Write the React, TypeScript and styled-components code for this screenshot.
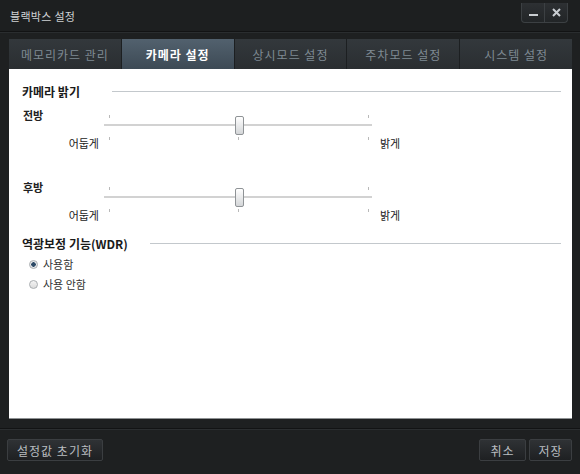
import styled, { createGlobalStyle } from "styled-components";

const GlobalStyle = createGlobalStyle`
  html, body {
    margin: 0;
    padding: 0;
    background: #1e2021;
  }
  body {
    font-family: "Noto Sans CJK KR", "Noto Sans", sans-serif;
  }
`;

const tabs = ["메모리카드 관리", "카메라 설정", "상시모드 설정", "주차모드 설정", "시스템 설정"];

interface SliderGroupProps {
  title: string;
  value: number;
}

const SliderGroup = ({ title, value }: SliderGroupProps) => {
  return (
    <SliderGrid>
      <GroupTitle>{title}</GroupTitle>
      <Slider>
        <Tick style={{ left: 5 }} $top />
        <Tick style={{ left: 264 }} $top />
        <Track />
        <Tick style={{ left: 5 }} />
        <Tick style={{ left: 134 }} />
        <Tick style={{ left: 264 }} />
        <Thumb style={{ left: 5 + value * 259 - 4 }} />
      </Slider>
      <DarkLabel>어둡게</DarkLabel>
      <BrightLabel>밝게</BrightLabel>
    </SliderGrid>
  );
};

const App = () => {
  return (
    <Window>
      <GlobalStyle />
      <TitleBar>
        <Title>블랙박스 설정</Title>
        <WinButtons>
          <WinButton>
            <svg width="9" height="9" viewBox="0 0 9 9">
              <rect x="0" y="6" width="9" height="2" fill="#c9cdd1" />
            </svg>
          </WinButton>
          <WinButton>
            <svg width="9" height="9" viewBox="0 0 9 9">
              <path d="M1 1 L8 8 M8 1 L1 8" stroke="#c9cdd1" strokeWidth="2" />
            </svg>
          </WinButton>
        </WinButtons>
      </TitleBar>

      <Body>
        <TabRow>
          {tabs.map((t, i) => (
            <Tab key={t} $active={i === 1}>
              {t}
            </Tab>
          ))}
        </TabRow>

        <Panel>
          <Heading $labelWidth={90}>
            <HeadingText>카메라 밝기</HeadingText>
            <HeadingLine />
          </Heading>

          <SliderGroup title="전방" value={0.5} />
          <Spacer $h={28} />
          <SliderGroup title="후방" value={0.5} />

          <Spacer $h={12} />
          <Heading $labelWidth={128}>
            <HeadingText>역광보정 기능(WDR)</HeadingText>
            <HeadingLine />
          </Heading>

          <RadioList>
            <RadioRow>
              <RadioDot $checked />
              사용함
            </RadioRow>
            <RadioRow>
              <RadioDot />
              사용 안함
            </RadioRow>
          </RadioList>
        </Panel>
      </Body>

      <Footer>
        <FooterButton $width={96}>설정값 초기화</FooterButton>
        <FooterRight>
          <FooterButton $width={47}>취소</FooterButton>
          <FooterButton $width={43}>저장</FooterButton>
        </FooterRight>
      </Footer>
    </Window>
  );
};

const Window = styled.div`
  width: 580px;
  height: 474px;
  background: #1e2021;
  display: flex;
  flex-direction: column;
  overflow: hidden;
`;

const TitleBar = styled.div`
  height: 31px;
  display: flex;
  align-items: center;
  padding: 0 12px 0 10px;
  background: #1d1f20;
  border-bottom: 1px solid #121314;
  box-shadow: 0 1px 0 #2a2d2f;
`;

const Title = styled.span`
  font-size: 11px;
  color: #cfd2d4;
  letter-spacing: 0.3px;
`;

const WinButtons = styled.div`
  margin-left: auto;
  align-self: flex-start;
  margin-top: 3px;
  display: flex;
  border: 1px solid #3c4043;
  border-top: none;
  border-radius: 0 0 4px 4px;
  overflow: hidden;
  background: linear-gradient(#2d3033, #222527);
`;

const WinButton = styled.div`
  width: 22px;
  height: 19px;
  display: flex;
  align-items: center;
  justify-content: center;
  & + & {
    border-left: 1px solid #3c4043;
  }
`;

const Body = styled.div`
  padding: 7px 8px 0 9px;
`;

const TabRow = styled.div`
  display: flex;
  height: 30px;
`;

const Tab = styled.div<{ $active?: boolean }>`
  flex: 1;
  display: flex;
  align-items: center;
  justify-content: center;
  font-size: 12px;
  font-weight: ${(p) => (p.$active ? "bold" : "normal")};
  letter-spacing: 1px;
  color: ${(p) => (p.$active ? "#ffffff" : "#7f8a93")};
  background: ${(p) =>
    p.$active
      ? "linear-gradient(#52616e, #3d4a55)"
      : "linear-gradient(#33383c, #2a2e31)"};
  border-right: 1px solid #1c1f21;
  &:last-child {
    border-right: none;
  }
`;

const Panel = styled.div`
  height: 350px;
  background: #ffffff;
  border-bottom: 1px solid #8e9193;
  padding: 14px 11px 0 13px;
  box-sizing: border-box;
  display: flex;
  flex-direction: column;
`;

const Heading = styled.div<{ $labelWidth: number }>`
  display: grid;
  grid-template-columns: ${(p) => p.$labelWidth}px 1fr;
  align-items: center;
  height: 16px;
  margin-bottom: 8px;
`;

const HeadingText = styled.span`
  font-size: 12px;
  font-weight: bold;
  color: #1a1a1a;
  white-space: nowrap;
`;

const HeadingLine = styled.div`
  height: 1px;
  background: #c3c8cc;
`;

const SliderGrid = styled.div`
  display: grid;
  grid-template-columns: 82px 268px 1fr;
  grid-template-rows: 28px 16px;
  font-size: 11px;
  color: #222;
`;

const GroupTitle = styled.div`
  grid-column: 1;
  grid-row: 1;
  font-size: 11px;
  font-weight: bold;
  line-height: 16px;
  padding-left: 1px;
`;

const Slider = styled.div`
  grid-column: 2;
  grid-row: 1 / 3;
  position: relative;
`;

const Track = styled.div`
  position: absolute;
  left: 0;
  right: 0;
  top: 17px;
  height: 2px;
  background: #d2d2d2;
`;

const Tick = styled.div<{ $top?: boolean }>`
  position: absolute;
  top: ${(p) => (p.$top ? 8 : 30)}px;
  width: 1px;
  height: 3px;
  background: #b9b9b9;
`;

const Thumb = styled.div`
  position: absolute;
  top: 9px;
  width: 7px;
  height: 17px;
  border: 1px solid #8f9396;
  border-radius: 2px;
  background: linear-gradient(#ffffff, #d4d6d8);
`;

const DarkLabel = styled.div`
  grid-column: 1;
  grid-row: 2;
  justify-self: end;
  padding-right: 5px;
  line-height: 16px;
`;

const BrightLabel = styled.div`
  grid-column: 3;
  grid-row: 2;
  padding-left: 8px;
  line-height: 16px;
`;

const Spacer = styled.div<{ $h: number }>`
  height: ${(p) => p.$h}px;
  flex-shrink: 0;
`;

const RadioList = styled.div`
  margin-top: -5px;
  padding-left: 7px;
  display: flex;
  flex-direction: column;
`;

const RadioRow = styled.div`
  height: 20px;
  display: flex;
  align-items: center;
  gap: 5px;
  font-size: 11px;
  color: #333;
`;

const RadioDot = styled.span<{ $checked?: boolean }>`
  width: 7px;
  height: 7px;
  border-radius: 50%;
  border: 1px solid #a9adb0;
  background: ${(p) =>
    p.$checked
      ? "radial-gradient(circle, #2d4a66 0 2px, #e6e8ea 2.5px)"
      : "linear-gradient(#f4f4f4, #dcdcdc)"};
`;

const Footer = styled.div`
  margin-top: 9px;
  border-top: 1px solid #121314;
  box-shadow: inset 0 1px 0 #2b2e30;
  padding: 10px 8px 0 7px;
  display: flex;
  align-items: flex-start;
`;

const FooterRight = styled.div`
  margin-left: auto;
  display: flex;
  gap: 3px;
`;

const FooterButton = styled.div<{ $width: number }>`
  width: ${(p) => p.$width}px;
  height: 22px;
  box-sizing: border-box;
  display: flex;
  align-items: center;
  justify-content: center;
  border: 1px solid #3b3e41;
  border-radius: 2px;
  background: linear-gradient(#2f3235, #1e2022);
  color: #b9bdc0;
  font-size: 12px;
  letter-spacing: 1px;
`;

export default App;
